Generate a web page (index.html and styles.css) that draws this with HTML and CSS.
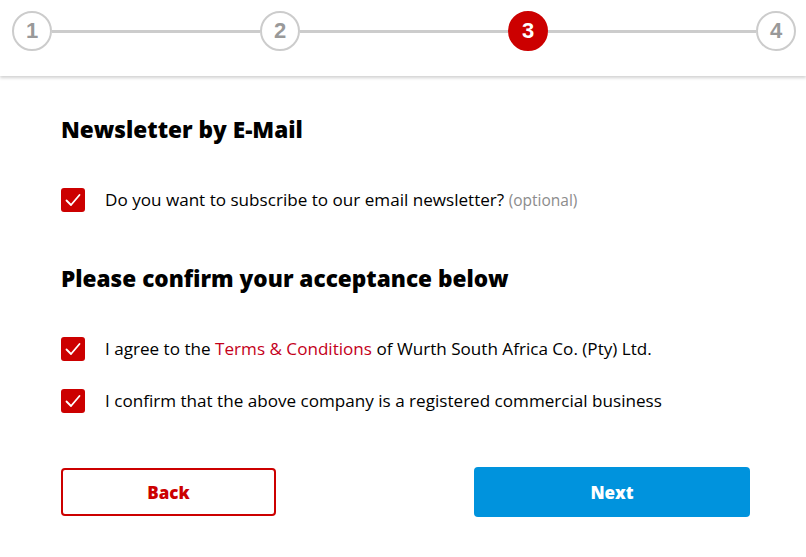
FILE: index.html
```html
<!DOCTYPE html>
<html>
<head>
<meta charset="utf-8">
<link rel="stylesheet" href="styles.css">
</head>
<body>
<header class="stepper">
  <div class="steps">
    <span class="step">1</span>
    <span class="line"></span>
    <span class="step">2</span>
    <span class="line"></span>
    <span class="step active">3</span>
    <span class="line"></span>
    <span class="step">4</span>
  </div>
</header>
<main class="content">
  <h2 class="title t1">Newsletter by E-Mail</h2>
  <label class="check r1">
    <span class="box"><svg viewBox="0 0 24 24" width="24" height="24"><path d="M5.5 12.5l4.5 4.5 8.5-10" fill="none" stroke="#fff" stroke-width="1.8" stroke-linecap="round" stroke-linejoin="round"/></svg></span>
    <span class="text">Do you want to subscribe to our email newsletter? <span class="opt">(optional)</span></span>
  </label>
  <h2 class="title t2">Please confirm your acceptance below</h2>
  <label class="check r2">
    <span class="box"><svg viewBox="0 0 24 24" width="24" height="24"><path d="M5.5 12.5l4.5 4.5 8.5-10" fill="none" stroke="#fff" stroke-width="1.8" stroke-linecap="round" stroke-linejoin="round"/></svg></span>
    <span class="text">I agree to the <a class="link">Terms &amp; Conditions</a> of Wurth South Africa Co. (Pty) Ltd.</span>
  </label>
  <label class="check r3">
    <span class="box"><svg viewBox="0 0 24 24" width="24" height="24"><path d="M5.5 12.5l4.5 4.5 8.5-10" fill="none" stroke="#fff" stroke-width="1.8" stroke-linecap="round" stroke-linejoin="round"/></svg></span>
    <span class="text">I confirm that the above company is a registered commercial business</span>
  </label>
  <div class="actions">
    <button class="btn back">Back</button>
    <button class="btn next">Next</button>
  </div>
</main>
</body>
</html>
```
FILE: styles.css
```css
* { box-sizing: border-box; }
html, body { margin: 0; padding: 0; background: #fff; }
body {
  font-family: "Open Sans", "Liberation Sans", sans-serif;
  color: #000;
  width: 806px;
  height: 557px;
  overflow: hidden;
}
.stepper {
  height: 76px;
  box-shadow: 0 2px 3px rgba(0,0,0,0.18);
  padding: 11px 10px 0 12px;
}
.steps {
  display: flex;
  align-items: center;
}
.step {
  flex: none;
  width: 40px;
  height: 40px;
  border-radius: 50%;
  border: 2px solid #cccccc;
  display: flex;
  align-items: center;
  justify-content: center;
  font-family: "Liberation Sans", sans-serif;
  font-weight: 700;
  font-size: 22px;
  color: #999999;
  background: #fff;
}
.step.active {
  background: #cc0000;
  border-color: #cc0000;
  color: #fff;
}
.line {
  flex: 1;
  height: 3px;
  background: #cccccc;
}
.content {
  padding: 0 56px 0 61px;
}
.title {
  margin: 0;
  font-size: 22.6px;
  font-weight: 800;
  line-height: 30px;
}
.t1 { padding-top: 39px; }
.t2 { padding-top: 52px; }
.check {
  display: flex;
  align-items: center;
  gap: 20px;
  font-size: 17.1px;
  line-height: 24px;
}
.r1 { margin-top: 43px; }
.r2 { margin-top: 43px; }
.r3 { margin-top: 28px; }
.box {
  flex: none;
  width: 24px;
  height: 24px;
  border-radius: 3px;
  background: #cc0000;
  display: block;
}
.box svg { display: block; }
.opt { color: #8c8c8c; font-size: 15.5px; }
.link { color: #c4001a; }
.actions {
  display: flex;
  justify-content: space-between;
  align-items: center;
  margin-top: 54px;
}
.btn {
  font-family: "Open Sans", "Liberation Sans", sans-serif;
  font-weight: 800;
  font-size: 17px;
  border-radius: 4px;
  cursor: pointer;
}
.back {
  width: 215px;
  height: 48px;
  background: #fff;
  border: 2px solid #cc0000;
  color: #cc0000;
}
.next {
  width: 276px;
  height: 50px;
  background: #0093dd;
  border: none;
  color: #fff;
}
```
